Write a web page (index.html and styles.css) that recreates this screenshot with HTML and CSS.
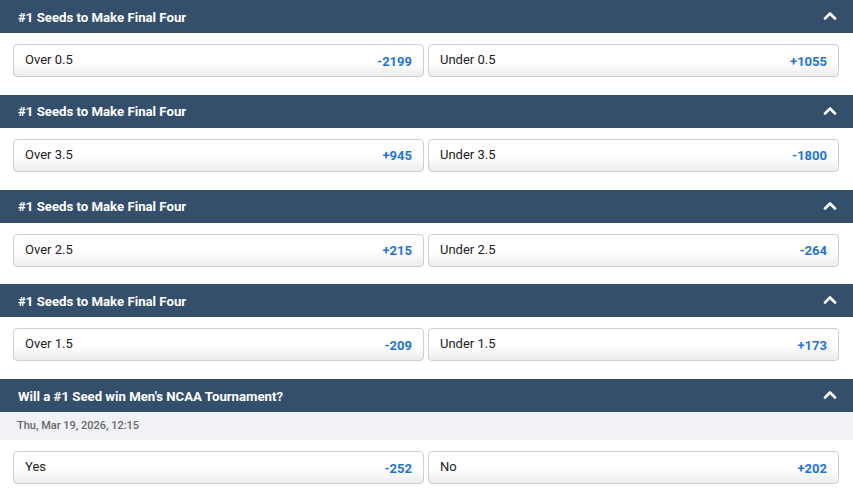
FILE: index.html
```html
<!DOCTYPE html>
<html lang="en">
<head>
    <meta charset="UTF-8">
    <meta name="viewport" content="width=device-width, initial-scale=1.0">
    <title>Futures</title>
    <link rel="stylesheet" href="styles.css">
</head>
<body>
    <div class="market-list">
        <div class="market">
            <div class="market-header">
                <span>#1 Seeds to Make Final Four</span>
                <svg class="chevron" width="14" height="9" viewBox="0 0 14 9"><path d="M2 7.5 L7 2.5 L12 7.5" fill="none" stroke="#fff" stroke-width="2.6" stroke-linecap="round" stroke-linejoin="round"/></svg>
            </div>
            <div class="market-options">
                <button class="odds-btn"><span class="label">Over 0.5</span><span class="price">-2199</span></button>
                <button class="odds-btn"><span class="label">Under 0.5</span><span class="price">+1055</span></button>
            </div>
        </div>

        <div class="market">
            <div class="market-header">
                <span>#1 Seeds to Make Final Four</span>
                <svg class="chevron" width="14" height="9" viewBox="0 0 14 9"><path d="M2 7.5 L7 2.5 L12 7.5" fill="none" stroke="#fff" stroke-width="2.6" stroke-linecap="round" stroke-linejoin="round"/></svg>
            </div>
            <div class="market-options">
                <button class="odds-btn"><span class="label">Over 3.5</span><span class="price">+945</span></button>
                <button class="odds-btn"><span class="label">Under 3.5</span><span class="price">-1800</span></button>
            </div>
        </div>

        <div class="market">
            <div class="market-header">
                <span>#1 Seeds to Make Final Four</span>
                <svg class="chevron" width="14" height="9" viewBox="0 0 14 9"><path d="M2 7.5 L7 2.5 L12 7.5" fill="none" stroke="#fff" stroke-width="2.6" stroke-linecap="round" stroke-linejoin="round"/></svg>
            </div>
            <div class="market-options">
                <button class="odds-btn"><span class="label">Over 2.5</span><span class="price">+215</span></button>
                <button class="odds-btn"><span class="label">Under 2.5</span><span class="price">-264</span></button>
            </div>
        </div>

        <div class="market">
            <div class="market-header">
                <span>#1 Seeds to Make Final Four</span>
                <svg class="chevron" width="14" height="9" viewBox="0 0 14 9"><path d="M2 7.5 L7 2.5 L12 7.5" fill="none" stroke="#fff" stroke-width="2.6" stroke-linecap="round" stroke-linejoin="round"/></svg>
            </div>
            <div class="market-options">
                <button class="odds-btn"><span class="label">Over 1.5</span><span class="price">-209</span></button>
                <button class="odds-btn"><span class="label">Under 1.5</span><span class="price">+173</span></button>
            </div>
        </div>

        <div class="market">
            <div class="market-header">
                <span>Will a #1 Seed win Men's NCAA Tournament?</span>
                <svg class="chevron" width="14" height="9" viewBox="0 0 14 9"><path d="M2 7.5 L7 2.5 L12 7.5" fill="none" stroke="#fff" stroke-width="2.6" stroke-linecap="round" stroke-linejoin="round"/></svg>
            </div>
            <div class="market-date">Thu, Mar 19, 2026, 12:15</div>
            <div class="market-options">
                <button class="odds-btn"><span class="label">Yes</span><span class="price">-252</span></button>
                <button class="odds-btn"><span class="label">No</span><span class="price">+202</span></button>
            </div>
        </div>
    </div>
</body>
</html>
```

FILE: styles.css
```css
* {
    margin: 0;
    padding: 0;
    box-sizing: border-box;
}

body {
    font-family: Roboto, 'Liberation Sans', Arial, sans-serif;
    background: #fff;
    color: #222;
    overflow: hidden;
}

.market-list {
    display: flex;
    flex-direction: column;
}

.market-header {
    display: flex;
    align-items: center;
    justify-content: space-between;
    height: 33px;
    padding: 1px 16px 0 18px;
    background: #344f6b;
    color: #fff;
    font-size: 13.2px;
    font-weight: 700;
}

.chevron {
    display: block;
    margin-top: -3px;
}

.market-date {
    height: 28px;
    line-height: 28px;
    padding-left: 17px;
    background: #f0f2f5;
    color: #666;
    font-size: 11px;
    font-weight: 500;
}

.market-options {
    display: flex;
    gap: 4px;
    padding: 11px 14px 17.75px 13px;
}

.odds-btn {
    flex: 1;
    display: flex;
    align-items: center;
    justify-content: space-between;
    height: 33px;
    padding: 0 11px;
    background: linear-gradient(to bottom, #fff 0%, #fff 55%, #ececec 100%);
    border: 1px solid #cfcfcf;
    border-radius: 4px;
    font-family: Roboto, 'Liberation Sans', Arial, sans-serif;
    font-size: 13px;
    cursor: pointer;
}

.odds-btn .label {
    color: #222;
    margin-top: -2px;
}

.odds-btn .price {
    color: #1d74e0;
    font-weight: 700;
    margin-top: 1px;
}
```
